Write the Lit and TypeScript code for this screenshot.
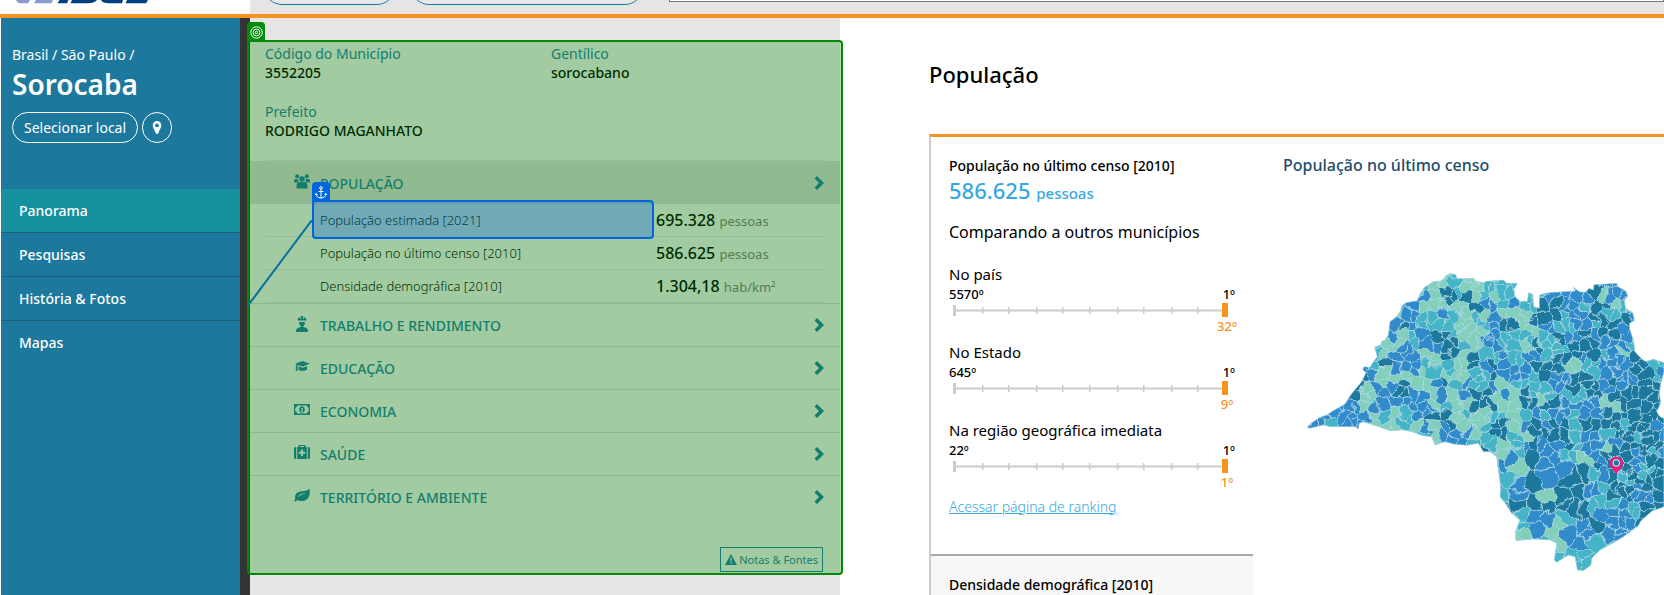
import { LitElement, html, svg, css } from "lit";
import { customElement } from "lit/decorators.js";
import { classMap } from "lit/directives/class-map.js";

type Pt = [number, number];

const OUTLINE =
  "52,502 62,490 90,472 108,466 130,452 165,432 180,408 190,395 215,365 228,338 218,328 222,320 240,322 250,305 262,290 254,262 270,256 276,244 285,240 295,225 300,185 318,172 330,155 336,138 348,128 380,122 392,98 404,82 430,65 455,62 470,46 483,40 497,44 502,56 550,55 556,62 580,68 590,64 640,60 650,70 682,70 672,88 674,108 690,125 712,123 716,98 728,102 731,140 748,145 748,105 770,99 790,97 855,93 850,82 868,95 886,97 897,85 910,90 912,74 980,70 984,80 1008,94 1013,108 1003,122 1007,145 1028,158 1034,182 1018,190 1020,210 1030,240 1035,275 1050,292 1066,305 1090,298 1122,308 1122,335 1112,372 1108,400 1112,430 1100,455 1112,472 1122,475 1122,740 1085,754 1052,783 1045,797 1000,830 970,848 930,870 905,895 903,915 880,932 862,930 855,890 835,885 820,895 800,907 793,900 800,850 780,840 730,837 678,842 676,815 690,780 665,760 650,735 630,710 632,680 625,630 620,590 600,575 580,575 565,550 530,556 490,552 465,545 435,555 425,530 400,527 365,515 340,510 300,512 260,498 220,485 208,490 205,507 195,500 150,500 120,500 100,495 60,505";

/* First column, then one population class per municipality. */
const CLASSES: [number, string][] = [
  [13, "TLLTLLTTTTTT"],
  [12, "LTLLTLLTTTTTT......BBLBB"],
  [12, "LBLDDDLTLTTTTTBBBBDLBB"],
  [11, "BBLLLLLDBBTBTTDDBBTDDLTT"],
  [10, "LBBTTBTLTLBLLLDDDTBBDTTDB"],
  [10, "BDBTTTLLLTBDDLDBTTBBTDDBT"],
  [9, "BBLTBDDTLLBBTTTLTDBBDBDDBB"],
  [8, "TLLBTBBDDTLBBTTLDTTTDDDBBBT"],
  [8, "TLBBBLLDDLDTTBTBBTDDDBDTBLD"],
  [7, "BTDBBBTLTLLDBDBBBDDDLLTTBBBDDTT"],
  [7, "DBLLLBLTLLLTTDBBBTDBBDDTBBBBDTB"],
  [6, "DLBLBDLLBDTBTTBLTTTTBBDDDBDBBDDD"],
  [6, "DLLBDDBBLBLBDDLBLDTLTTTTDLDDDDDD"],
  [4, "BBBLBBBBBBLTLLDDDLLDDDDBBBBLLDDDDD"],
  [3, "BBBBBLTLTBBDDLTLLTTLTBTBBTBBDDDDDDD"],
  [1, "BBBTBBBLLLTLBLBDLLTDDLBDBDDTDDDDTDDB"],
  [11, "TLTLBBBLTDDTLDDDDTBBTDDTDDB"],
  [12, "LLLBBBTDTLTBDBBDTBBLBDDDDB"],
  [19, "TLLBTDBBTTLBDDDBDT"],
  [20, "TBLBBBBBBDDBDDBTD"],
  [20, "LTLBBBBTDDTBDTDTD"],
  [20, "BTBBDBBDDDTTDDBDD"],
  [20, "TTBBDLBDDBBBDDBBD"],
  [20, "DDDBDDDDDDTTTBTDD"],
  [20, "DDDTBBBTBBBBBBTDD"],
  [20, "LLLTBBLLBBDBBBBDD"],
  [20, "LLLLLLLBBBBBBBB"],
  [24, "LTTTBBTTTT"],
  [25, "TTTTTTT"],
  [25, "TTTTTTT"],
];

const PALETTE: Record<string, string> = { L: "#82cfbb", T: "#44b4c6", B: "#318bcb", D: "#1c789c" };

function random(seed: number) {
  let s = seed;
  return () => {
    s = (s * 1664525 + 1013904223) >>> 0;
    return s / 4294967296;
  };
}

/* Keeps the part of a polygon that lies nearer to a than to b. */
function clipNearer(poly: Pt[], a: Pt, b: Pt): Pt[] {
  const nx = b[0] - a[0];
  const ny = b[1] - a[1];
  const c = (b[0] * b[0] + b[1] * b[1] - a[0] * a[0] - a[1] * a[1]) / 2;
  const out: Pt[] = [];
  for (let i = 0; i < poly.length; i++) {
    const p = poly[i];
    const q = poly[(i + 1) % poly.length];
    const dp = p[0] * nx + p[1] * ny - c;
    const dq = q[0] * nx + q[1] * ny - c;
    if (dp <= 0) out.push(p);
    if (dp * dq < 0) {
      const t = dp / (dp - dq);
      out.push([p[0] + t * (q[0] - p[0]), p[1] + t * (q[1] - p[1])]);
    }
  }
  return out;
}

function buildCells() {
  const rnd = random(41);
  const seeds: { p: Pt; k: string }[] = [];
  CLASSES.forEach(([start, row], r) => {
    [...row].forEach((k, i) => {
      if (k === ".") return;
      const x = (start + i) * 30 + 15;
      const y = r * 30 + 45;
      const south = y > 600 && x < 960;
      if (south && rnd() < 0.45) return;
      seeds.push({ p: [x + (rnd() - 0.5) * 24, y + (rnd() - 0.5) * 24], k });
      const crowded = (x > 960 && y > 470 && y < 700) || (x > 700 && x < 830 && y > 210 && y < 280);
      if (rnd() < (crowded ? 0.6 : 0.06)) {
        seeds.push({ p: [x + 15 + (rnd() - 0.5) * 10, y + 15 + (rnd() - 0.5) * 10], k });
      }
    });
  });
  return seeds.map(({ p, k }) => {
    let poly: Pt[] = [[p[0] - 60, p[1] - 60], [p[0] + 60, p[1] - 60], [p[0] + 60, p[1] + 60], [p[0] - 60, p[1] + 60]];
    for (const other of seeds) {
      const q = other.p;
      if (q !== p && Math.abs(q[0] - p[0]) < 130 && Math.abs(q[1] - p[1]) < 130) poly = clipNearer(poly, p, q);
    }
    return { points: poly.map((v) => `${v[0].toFixed(1)},${v[1].toFixed(1)}`).join(" "), fill: PALETTE[k] };
  });
}

const CELLS = buildCells();

@customElement("state-map")
export class StateMap extends LitElement {
  static styles = css`
    :host { display: block; }
    svg { display: block; width: 374px; height: 335px; }
  `;
  render() {
    return html`<svg viewBox="0 0 1122 1005" role="img" aria-label="Mapa de São Paulo">
      <defs>
        <clipPath id="state"><polygon points=${OUTLINE}></polygon></clipPath>
        <filter id="rough" x="0" y="0" width="1" height="1" color-interpolation-filters="sRGB">
          <feTurbulence type="fractalNoise" baseFrequency="0.03" numOctaves="2" seed="4"></feTurbulence>
          <feDisplacementMap in="SourceGraphic" scale="34" xChannelSelector="R" yChannelSelector="G"></feDisplacementMap>
        </filter>
      </defs>
      <g clip-path="url(#state)">
        <rect width="1122" height="1005" fill="#318bcb"></rect>
        <g filter="url(#rough)">
          ${CELLS.map((c) => svg`<polygon points=${c.points} fill=${c.fill} stroke="#b4dbe6" stroke-width="2.4"></polygon>`)}
        </g>
      </g>
      <polygon points=${OUTLINE} fill="none" stroke="#b9dfe8" stroke-width="2"></polygon>
      <path fill="#f4187c" fill-rule="evenodd" d="M979 590c-11 0-20 9-20 20 0 12 12 18 20 33 8-15 20-21 20-33 0-11-9-20-20-20zm0 7a12 12 0 1 1 0 24 12 12 0 0 1 0-24z"></path>
      <circle cx="979" cy="609" r="11" fill="#d8ebf1"></circle>
      <circle cx="979" cy="609" r="8" fill="#1c789c"></circle>
    </svg>`;
  }
}

const TICKS = [34, 60, 88, 114, 141, 169, 195, 223, 249];

@customElement("rank-scale")
export class RankScale extends LitElement {
  static properties = { label: {}, last: {}, place: {} };
  declare label: string;
  declare last: string;
  declare place: string;
  static styles = css`
    :host { display: block; }
    .label { font-size: 15px; line-height: 22px; }
    .ends { display: flex; justify-content: space-between; font-size: 13px; font-weight: 500; line-height: 18px; }
    svg { display: block; width: 100%; height: 14px; }
    .place { width: 22px; margin-left: auto; margin-right: -3px; text-align: center; font-size: 13px; font-weight: 500; line-height: 18px; color: #f7931e; }
  `;
  render() {
    return html`<div class="label">${this.label}</div>
      <div class="ends"><span>${this.last}</span><span>1º</span></div>
      <svg viewBox="0 0 286 14" preserveAspectRatio="none" aria-hidden="true">
        <path d="M4 7.5h270" stroke="#ccc" stroke-width="2"></path>
        <path d="M4 2h3v11H4z" fill="#ccc"></path>
        ${TICKS.map((x) => svg`<path d="M${x - 1} 4h1.5v7h-1.5z" fill="#ccc"></path>`)}
        <path d="M273 0h6v14h-6z" fill="#f7931e"></path>
      </svg>
      <div class="place">${this.place}</div>`;
  }
}

const ICONS = {
  people: svg`<circle cx="8" cy="5" r="2.8"></circle><circle cx="3.2" cy="2.2" r="2"></circle><circle cx="12.8" cy="2.2" r="2"></circle><path d="M2.5 14.5V11c0-2 1.300-3 3-3h5c1.700 0 3 1 3 3v3.500zM0 8.500V6.500c0-1 .8-1.600 1.700-1.600H4C4 6 4.300 7 5 7.600c-1 .2-1.800.5-2.300.9zM16 8.500V6.500c0-1-.8-1.600-1.700-1.600H12c0 1.100-.3 2.100-1 2.700 1 .2 1.800.5 2.300.9z"></path>`,
  worker: svg`<path d="M3.500 4.500C3.500 2.500 4.500 1.500 6 1v2l.8-.2V0h2.400v2.800l.8.200V1c1.500.5 2.500 1.500 2.500 3.500zM5 6h6c0 2-.7 3.500-1.800 4.200v.9c2.800.3 4.800 1.500 4.800 3.900 0 .6-.4 1-1 1H3c-.6 0-1-.4-1-1 0-2.400 2-3.600 4.800-3.900v-.9C5.700 9.500 5 8 5 6z"></path>`,
  cap: svg`<path d="M1 4.800L8.500 2 16 4.800 8.500 7.600 3.500 6v6H1.800V7.500c0-1 .4-1.500 1-1.800zM4.500 7.300l4 1.500 4.500-1.600v3.200c-1 1.500-7 2.300-8.500 0z"></path>`,
  money: svg`<path fill-rule="evenodd" d="M0 2h16v11H0zm3 1.500C3 5 2.300 5.500 1.300 5.500v4C2.300 9.500 3 10 3 11.500h10c0-1.500.7-2 1.700-2v-4c-1 0-1.700-.5-1.700-2zM8 4.200c1.800 0 2.800 1.500 2.800 3.300s-1 3.300-2.800 3.300-2.800-1.500-2.800-3.300S6.200 4.200 8 4.200zM7 6v.9h.6v2H7v.8h2v-.8h-.4V6z"></path>`,
  kit: svg`<path fill-rule="evenodd" d="M4.500 2V.8c0-.5.3-.8.800-.8h5.400c.5 0 .8.300.8.800V2h1.300v12H3.200V2zM6 2h4V1H6zM0 3.500C0 2.500.8 2 2.200 2v12C.8 14 0 13.500 0 12.500zm16 0c0-1-.8-1.500-2.200-1.500v12c1.400 0 2.200-.5 2.200-1.500zM7 4.500v2.300H4.800v2H7V11h2V8.800h2.200v-2H9V4.500z"></path>`,
  leaf: svg`<path fill-rule="evenodd" d="M15.300.5c1.300 4.500.6 12-7.300 12.500-2 .1-3.500-.5-4.500-.8L1 13.500 0 12.800l1.300-1.700C0 6 3.500 3.400 8 3.200 11.500 3 14 2.300 15.300.5zM3.500 9.500c3-3 5.500-3.300 8.500-3.700C9 5 4.800 6 3.500 9.500z"></path>`,
};

const SECTIONS = [
  { title: "Trabalho e rendimento", icon: ICONS.worker },
  { title: "Educação", icon: ICONS.cap },
  { title: "Economia", icon: ICONS.money },
  { title: "Saúde", icon: ICONS.kit },
  { title: "Território e ambiente", icon: ICONS.leaf },
];

const ROWS = [
  { label: "População estimada [2021]", value: "695.328", unit: "pessoas", marked: true },
  { label: "População no último censo [2010]", value: "586.625", unit: "pessoas", marked: false },
  { label: "Densidade demográfica [2010]", value: "1.304,18", unit: "hab/km²", marked: false },
];

@customElement("app-root")
export class AppRoot extends LitElement {
  static styles = css`
    :host {
      display: flex;
      flex-direction: column;
      min-height: 100vh;
      overflow: hidden;
      background: #fff;
      color: #000;
      font-family: "Noto Sans", "Open Sans", sans-serif;
    }
    * { box-sizing: border-box; }
    button { font: inherit; color: inherit; background: none; border: 0; padding: 0; margin: 0; cursor: pointer; }
    a { color: inherit; text-decoration: none; }
    h1, h2, h3, p, dl, dd, ul { margin: 0; padding: 0; font-weight: inherit; }

    .top { display: flex; height: 18px; border-bottom: 4px solid #f7931e; overflow: hidden; }
    .brand { flex: 0 0 250px; padding-left: 15px; }
    .brand svg { display: block; }
    .tools { flex: 1; display: flex; align-items: flex-start; background: #e5e5e5; padding-left: 14px; gap: 16px; }
    .tool { flex: none; height: 36px; margin-top: -31px; border: 1px solid #1c789c; border-radius: 18px; background: #e8e8e8; }
    .narrow { width: 131px; }
    .wide { width: 232px; }
    .search { flex: 1; min-width: 0; height: 32px; margin: -30px 0 0 10px; border: 1px solid #777; background: #fff; }

    .page { flex: 1; display: grid; grid-template-columns: 249px minmax(0, 590px) minmax(0, 1fr); padding-left: 1px; }
    .side { background: #1c789c; border-right: 10px solid #333; color: #fff; }
    .place { padding: 26px 11px 46px; }
    .crumbs { font-size: 14px; line-height: 22px; }
    .city { font-size: 28px; font-weight: 600; line-height: 36px; }
    .pick { display: flex; gap: 4px; margin-top: 10px; }
    .pill { display: grid; place-items: center; height: 31px; border: 1px solid #fff; border-radius: 16px; padding: 0 11px; font-size: 14px; }
    .round { width: 30px; padding: 0; }
    .nav { list-style: none; }
    .nav a { display: block; height: 44px; padding-left: 18px; border-bottom: 1px solid #196078; font-size: 14px; font-weight: 500; line-height: 44px; }
    .nav .active { background: #168f9f; }
    .nav li:last-child a { border-bottom: 0; }

    .panel { background: #e5e5e5; }
    .region { position: relative; padding-bottom: 3px; }
    .facts { display: grid; grid-template-columns: 1fr 1fr; gap: 20px 12px; margin: 0 15px; padding: 26px 0 20px; border-bottom: 1px solid #d3d3d3; font-size: 14px; line-height: 19px; }
    .facts dt { color: #1c789c; }
    .facts dd { font-weight: 500; }
    .section { display: flex; align-items: center; width: 100%; height: 43px; padding: 0 15px 0 44px; border-top: 1px solid #c9c9c9; color: #1c789c; text-align: left; }
    .section svg { flex: none; fill: currentColor; }
    .section .glyph { margin-bottom: 3px; }
    .section span { flex: 1; padding: 1px 0 0 10px; font-size: 14px; font-weight: 500; text-transform: uppercase; }
    .open { background: #cdcdcd; border-top-color: #cdcdcd; }
    .row { display: flex; height: 33px; margin: 0 15px; padding-left: 55px; border-bottom: 1px solid #d3d3d3; line-height: 32px; }
    .name { position: relative; flex: 0 0 336px; font-size: 13px; font-weight: 300; }
    .value { font-size: 16px; font-weight: 500; }
    .unit { font-size: 13px; font-weight: 400; color: #777; }
    .notes { display: flex; align-items: center; gap: 2px; height: 25px; margin: 29px 17px 0 auto; padding: 0 4px; border: 1px solid #1c789c; color: #1c789c; font-size: 11px; }

    .mark { position: absolute; border: 2px solid; border-radius: 4px; pointer-events: none; }
    .mark .tab { position: absolute; left: -2px; bottom: 100%; display: grid; place-items: center; width: 18px; height: 20px; border-radius: 4px 4px 0 0; }
    .green { inset: 22px -3px 0 -3px; border-color: #008a0a; background: rgba(0, 140, 0, 0.29); z-index: 1; }
    .green .tab { background: #008a0a; }
    .blue { inset: -4px 2px -3px -8px; border-color: #0066e0; background: rgba(0, 95, 225, 0.3); z-index: 2; }
    .blue .tab { background: #0066e0; }
    .blue .link { position: absolute; right: 100%; top: 18px; margin-right: 2px; }

    .content { padding: 41px 0 0 89px; display: flex; flex-direction: column; }
    .heading { font-size: 22px; font-weight: 500; line-height: 30px; }
    .card { flex: 1; display: grid; grid-template-columns: 322px minmax(0, 1fr); margin-top: 45px; border-top: 3px solid #f7931e; border-left: 2px solid #ccc; }
    .stats { display: flex; flex-direction: column; }
    .stat { padding: 18px; }
    .stat.main { padding-bottom: 37px; }
    .stat.next { flex: 1; padding-bottom: 0; background: #f7f7f7; border-top: 2px solid #aaa; }
    .stat h3 { font-size: 14px; font-weight: 500; line-height: 22px; }
    .total { font-size: 22px; font-weight: 500; line-height: 26px; color: #35a8e0; }
    .total small { font-size: 15px; }
    .compare { margin-top: 15px; font-size: 16px; line-height: 22px; }
    .scales { display: grid; gap: 6px; margin-top: 20px; }
    .ranking { display: block; width: fit-content; margin-top: 6px; font-size: 14px; font-weight: 300; line-height: 20px; color: #35a8e0; text-decoration: underline; }
    .maparea { padding: 16px 0 0 30px; }
    .maparea h3 { font-size: 16px; font-weight: 500; line-height: 24px; color: #1d4d6b; }
    .maparea state-map { margin: 83px 0 0 7px; }
  `;

  private section(title: string, icon: unknown, open = false) {
    return html`<button class=${classMap({ section: true, open })} aria-expanded=${open ? "true" : "false"}>
      <svg class="glyph" width="16" height="16" viewBox="0 0 16 16" aria-hidden="true">${icon}</svg>
      <span>${title}</span>
      <svg width="11" height="14" viewBox="0 0 11 14" aria-hidden="true"><path d="M3 0l7 7-7 7-2.500-2.500L5 7 .5 2.500z"></path></svg>
    </button>`;
  }

  render() {
    return html`
      <header class="top">
        <div class="brand">
          <svg width="140" height="4" viewBox="0 0 140 4" role="img" aria-label="IBGE">
            <path fill="#8b9acb" d="M1 0h14l-2 3.300H5C3 3 2 2 1 0zM21 0h17L36.500 3.300H19z"></path>
            <path fill="#003f7d" d="M44.500 0h9L52 3.300h-9.500zM57 0h25c-2 2.300-5 3.300-9 3.300H55.500zM86 0h22l-1 3.300H94c-4 0-7-1-8-3.300zM112 0h21l-2 3.300h-20.500z"></path>
          </svg>
        </div>
        <div class="tools">
          <button class="tool narrow" aria-label="Selecionar tema"></button>
          <button class="tool wide" aria-label="Selecionar pesquisa"></button>
          <input class="search" type="search" aria-label="Buscar" />
        </div>
      </header>
      <div class="page">
        <aside class="side">
          <div class="place">
            <p class="crumbs"><a href="#">Brasil</a> / <a href="#">São Paulo</a> /</p>
            <h1 class="city">Sorocaba</h1>
            <div class="pick">
              <button class="pill">Selecionar local</button>
              <button class="pill round" aria-label="Localização">
                <svg width="10" height="13" viewBox="0 0 10 13" aria-hidden="true"><path fill="#fff" fill-rule="evenodd" d="M5 0a4.300 4.300 0 0 1 4.300 4.300C9.300 7 7 9.500 6.300 12.200c-.3.900-2.300.9-2.600 0C3 9.500.7 7 .7 4.300A4.300 4.300 0 0 1 5 0zm0 2.500a1.900 1.900 0 1 0 0 3.800 1.900 1.900 0 0 0 0-3.800z"></path></svg>
              </button>
            </div>
          </div>
          <ul class="nav">
            <li><a class="active" href="#">Panorama</a></li>
            <li><a href="#">Pesquisas</a></li>
            <li><a href="#">História &amp; Fotos</a></li>
            <li><a href="#">Mapas</a></li>
          </ul>
        </aside>

        <section class="panel">
          <div class="region">
            <dl class="facts">
              <div><dt>Código do Município</dt><dd>3552205</dd></div>
              <div><dt>Gentílico</dt><dd>sorocabano</dd></div>
              <div><dt>Prefeito</dt><dd>RODRIGO MAGANHATO</dd></div>
            </dl>
            ${this.section("População", ICONS.people, true)}
            ${ROWS.map(
              (r) => html`<div class="row">
                <div class="name">${r.label}${r.marked
                  ? html`<div class="mark blue">
                      <div class="tab">
                        <svg width="12" height="13" viewBox="0 0 12 13" fill="none" stroke="#fff" aria-hidden="true"><circle cx="6" cy="2" r="1.300"></circle><path d="M6 3.300V12M3.500 5.500h5M1 7.500C1.300 10.500 3 12 6 12s4.700-1.500 5-4.500M.3 9l.8-1.500L2.500 8.500M11.700 9l-.8-1.500L9.500 8.500"></path></svg>
                      </div>
                      <svg class="link" width="64" height="86" viewBox="0 0 64 86" aria-hidden="true"><path d="M0 85.500L64 0" stroke="#0a70a0" stroke-width="2"></path></svg>
                    </div>`
                  : ""}</div>
                <div class="value">${r.value} <span class="unit">${r.unit}</span></div>
              </div>`
            )}
            ${SECTIONS.map((s) => this.section(s.title, s.icon))}
            <button class="notes">
              <svg width="12" height="11" viewBox="0 0 12 11" aria-hidden="true"><path fill="currentColor" fill-rule="evenodd" d="M6 0l6 11H0zM5.200 3.800l.3 3.400h1l.3-3.400zm.1 4.200v1.400h1.400V8z"></path></svg>
              Notas &amp; Fontes
            </button>
            <div class="mark green">
              <div class="tab">
                <svg width="13" height="13" viewBox="0 0 13 13" fill="none" stroke="#fff" aria-hidden="true"><circle cx="6.500" cy="6.500" r="5.700"></circle><circle cx="6.500" cy="6.500" r="3.400"></circle><circle cx="6.500" cy="6.500" r="1.200"></circle></svg>
              </div>
            </div>
          </div>
        </section>

        <main class="content">
          <h2 class="heading">População</h2>
          <div class="card">
            <div class="stats">
              <div class="stat main">
                <h3>População no último censo [2010]</h3>
                <p class="total">586.625 <small>pessoas</small></p>
                <p class="compare">Comparando a outros municípios</p>
                <div class="scales">
                  <rank-scale label="No país" last="5570º" place="32º"></rank-scale>
                  <rank-scale label="No Estado" last="645º" place="9º"></rank-scale>
                  <rank-scale label="Na região geográfica imediata" last="22º" place="1º"></rank-scale>
                </div>
                <a class="ranking" href="#">Acessar página de ranking</a>
              </div>
              <div class="stat next"><h3>Densidade demográfica [2010]</h3></div>
            </div>
            <div class="maparea">
              <h3>População no último censo</h3>
              <state-map></state-map>
            </div>
          </div>
        </main>
      </div>
    `;
  }
}
